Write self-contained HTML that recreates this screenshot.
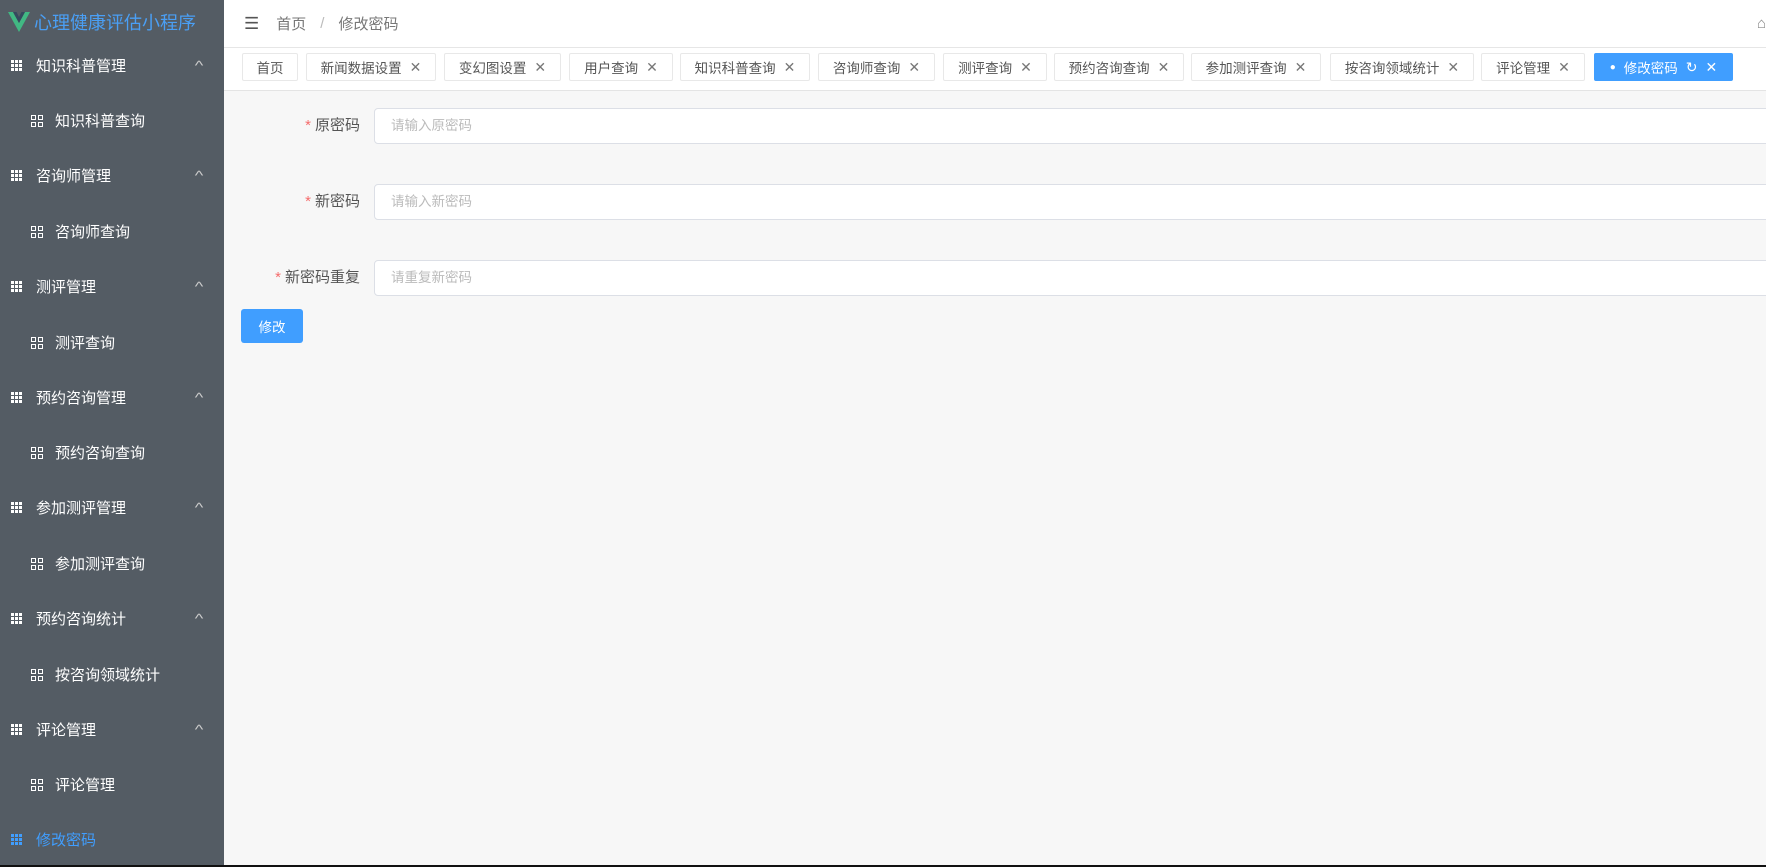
<!DOCTYPE html>
<html><head><meta charset="utf-8"><style>
*{margin:0;padding:0;box-sizing:border-box}
body{width:1766px;height:867px;overflow:hidden;background:#f7f7f7;font-family:"Liberation Sans","Noto Sans CJK SC",sans-serif;position:relative}
.side{position:absolute;left:0;top:0;width:224px;height:865px;background:#545c64;color:#fff}
.logo{height:43px;display:flex;align-items:center;padding-left:8px;color:#4a9ff5;font-size:18px}
.mi{position:absolute;left:0;width:224px;height:55px;display:flex;align-items:center;font-size:15px;color:#fff}
.grid{display:inline-block;width:11px;height:11px;margin-left:11px;margin-right:14px;background:
linear-gradient(90deg,transparent 3px,#545c64 3px,#545c64 4px,transparent 4px,transparent 7px,#545c64 7px,#545c64 8px,transparent 8px),
linear-gradient(transparent 3px,#545c64 3px,#545c64 4px,transparent 4px,transparent 7px,#545c64 7px,#545c64 8px,transparent 8px),#fff}
.car{position:absolute;right:22px;font-size:13px;color:#ccc;transform:scaleX(1.4)}
.sub{padding-left:31px}
.sq{display:inline-block;width:12px;height:12px;margin-right:12px;position:relative}
.sq i{position:absolute;width:5px;height:5px;border:1px solid #fff}
.hdr{position:absolute;left:224px;top:0;right:0;height:48px;background:#fff;border-bottom:1px solid #e6e6e6;display:flex;align-items:center;font-size:15px;color:#777}
.tabs{position:absolute;left:224px;top:48px;right:0;height:43px;background:#fff;border-bottom:1px solid #e4e4e4}
.tab{position:absolute;top:5px;height:28px;border:1px solid #e8e8e8;border-radius:2px;font-size:13.5px;color:#555;display:flex;align-items:center;justify-content:center;gap:8px}
.tab .x{color:#777;font-size:14px}
.tab.on{background:#409eff;border-color:#409eff;color:#fff}
.tab.on .x{color:#fff}
.row{position:absolute;left:224px;right:0;height:36px}
.lab{position:absolute;left:0;width:136px;text-align:right;font-size:15px;color:#555;line-height:36px}
.lab b{color:#f56c6c;font-weight:normal;margin-right:4px}
.inp{position:absolute;left:150px;right:-10px;top:0;height:36px;background:#fff;border:1px solid #dcdfe6;border-radius:4px;font-size:13.5px;color:#bbb;line-height:34px;padding-left:16px}
.btn{position:absolute;left:241px;top:309px;width:62px;height:34px;background:#409eff;color:#fff;border-radius:3px;font-size:13.5px;display:flex;align-items:center;justify-content:center}
.bot{position:absolute;left:0;bottom:0;width:1766px;height:2px;background:#111}
</style></head><body>
<div class="side">
<div class="logo"><svg width="22" height="20" viewBox="0 0 22 20"><path d="M0 0h5l6 11 6-11h5L11 20z" fill="#41b883"/><path d="M5 0h3.5l2.5 5 2.5-5H17l-6 11z" fill="#35495e"/></svg><span style="margin-left:4px">心理健康评估小程序</span></div>
</div>
<div class="mi" style="top:38px"><i class="grid"></i>知识科普管理<span class="car">^</span></div>
<div class="mi sub" style="top:93px"><span class="sq"><i style="left:0;top:0"></i><i style="left:7px;top:0"></i><i style="left:0;top:7px"></i><i style="left:7px;top:7px"></i></span>知识科普查询</div>
<div class="mi" style="top:148px"><i class="grid"></i>咨询师管理<span class="car">^</span></div>
<div class="mi sub" style="top:204px"><span class="sq"><i style="left:0;top:0"></i><i style="left:7px;top:0"></i><i style="left:0;top:7px"></i><i style="left:7px;top:7px"></i></span>咨询师查询</div>
<div class="mi" style="top:259px"><i class="grid"></i>测评管理<span class="car">^</span></div>
<div class="mi sub" style="top:315px"><span class="sq"><i style="left:0;top:0"></i><i style="left:7px;top:0"></i><i style="left:0;top:7px"></i><i style="left:7px;top:7px"></i></span>测评查询</div>
<div class="mi" style="top:370px"><i class="grid"></i>预约咨询管理<span class="car">^</span></div>
<div class="mi sub" style="top:425px"><span class="sq"><i style="left:0;top:0"></i><i style="left:7px;top:0"></i><i style="left:0;top:7px"></i><i style="left:7px;top:7px"></i></span>预约咨询查询</div>
<div class="mi" style="top:480px"><i class="grid"></i>参加测评管理<span class="car">^</span></div>
<div class="mi sub" style="top:536px"><span class="sq"><i style="left:0;top:0"></i><i style="left:7px;top:0"></i><i style="left:0;top:7px"></i><i style="left:7px;top:7px"></i></span>参加测评查询</div>
<div class="mi" style="top:591px"><i class="grid"></i>预约咨询统计<span class="car">^</span></div>
<div class="mi sub" style="top:647px"><span class="sq"><i style="left:0;top:0"></i><i style="left:7px;top:0"></i><i style="left:0;top:7px"></i><i style="left:7px;top:7px"></i></span>按咨询领域统计</div>
<div class="mi" style="top:702px"><i class="grid"></i>评论管理<span class="car">^</span></div>
<div class="mi sub" style="top:757px"><span class="sq"><i style="left:0;top:0"></i><i style="left:7px;top:0"></i><i style="left:0;top:7px"></i><i style="left:7px;top:7px"></i></span>评论管理</div>
<div class="mi" style="top:812px;color:#409eff"><i class="grid" style="background-color:#409eff"></i>修改密码</div>

<div class="hdr"><span style="margin-left:20px;font-size:17px;color:#555">&#9776;</span><span style="margin-left:17px">首页</span><span style="margin:0 14px;color:#bbb">/</span><span>修改密码</span><span style="position:absolute;right:0;color:#888">&#x2302;</span></div>
<div class="tabs">
<div class="tab" style="left:18px;width:56px">首页</div>
<div class="tab" style="left:82px;width:130px">新闻数据设置<span class="x">✕</span></div>
<div class="tab" style="left:220px;width:117px">变幻图设置<span class="x">✕</span></div>
<div class="tab" style="left:345px;width:104px">用户查询<span class="x">✕</span></div>
<div class="tab" style="left:456px;width:130px">知识科普查询<span class="x">✕</span></div>
<div class="tab" style="left:594px;width:117px">咨询师查询<span class="x">✕</span></div>
<div class="tab" style="left:719px;width:104px">测评查询<span class="x">✕</span></div>
<div class="tab" style="left:830px;width:130px">预约咨询查询<span class="x">✕</span></div>
<div class="tab" style="left:967px;width:130px">参加测评查询<span class="x">✕</span></div>
<div class="tab" style="left:1106px;width:144px">按咨询领域统计<span class="x">✕</span></div>
<div class="tab" style="left:1257px;width:104px">评论管理<span class="x">✕</span></div>
<div class="tab on" style="left:1370px;width:139px"><span style="font-size:10px">●</span>修改密码<span class="x">↻</span><span class="x">✕</span></div>
</div>

<div class="row" style="top:108px"><div class="lab"><b>*</b>原密码</div><div class="inp">请输入原密码</div></div>
<div class="row" style="top:184px"><div class="lab"><b>*</b>新密码</div><div class="inp">请输入新密码</div></div>
<div class="row" style="top:260px"><div class="lab"><b>*</b>新密码重复</div><div class="inp">请重复新密码</div></div>
<div class="btn">修改</div>
<div class="bot"></div>
</body></html>
